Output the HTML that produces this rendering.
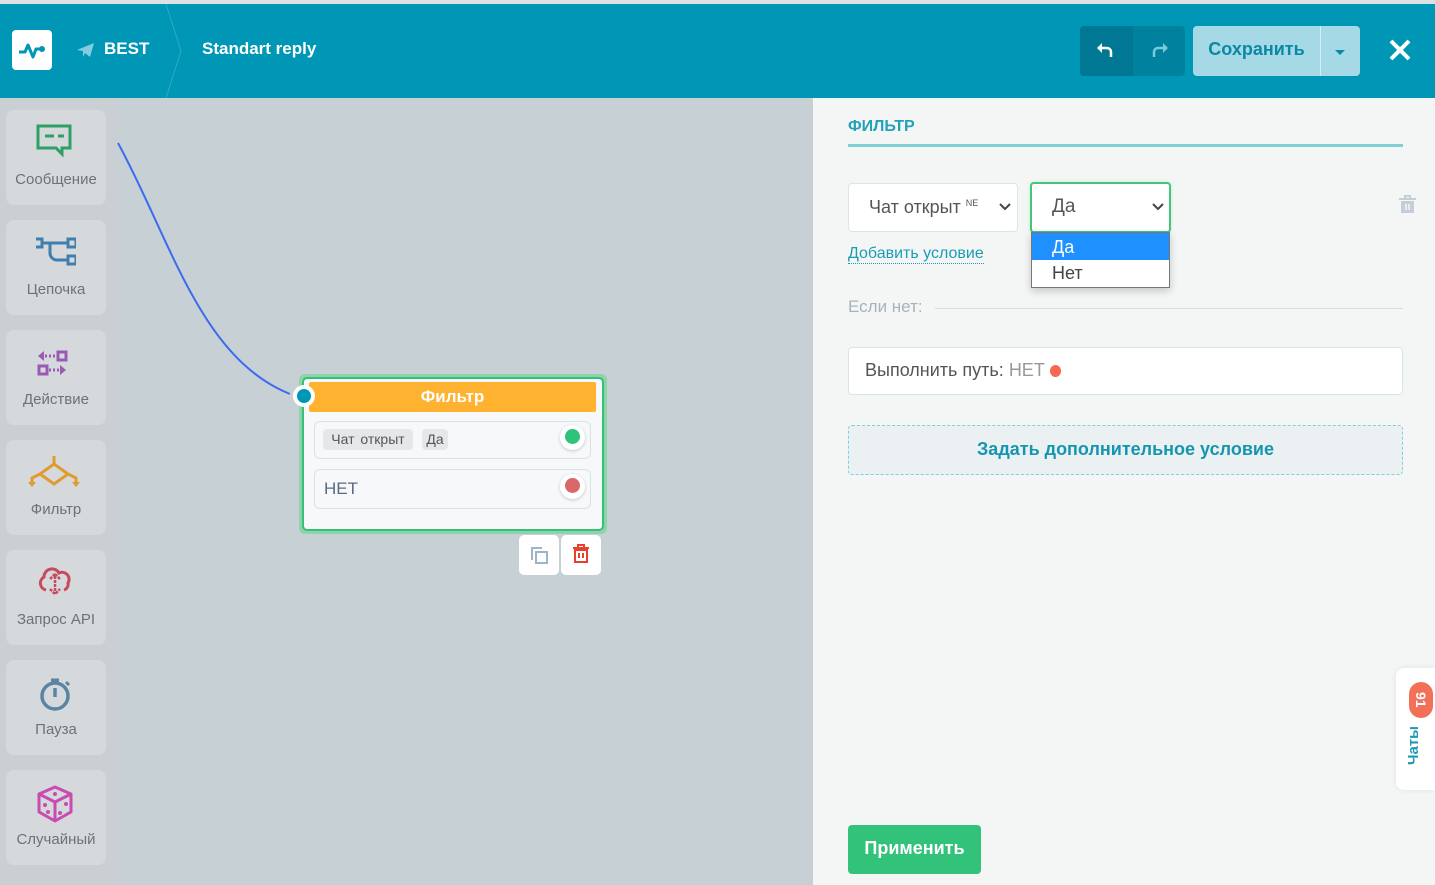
<!DOCTYPE html>
<html><head><meta charset="utf-8"><style>
*{box-sizing:border-box;margin:0;padding:0}
body{width:1435px;height:885px;overflow:hidden;font-family:"Liberation Sans",sans-serif;background:#c6d0d5;position:relative}
.top{position:absolute;left:0;top:0;width:1435px;height:4px;background:#dde1e3}
.hdr{position:absolute;left:0;top:4px;width:1435px;height:94px;background:#0097b6}
.abs{position:absolute}
.side{position:absolute;left:0;top:98px;width:118px;height:787px;background:#c9cfd3}
.item{position:absolute;left:6px;width:100px;height:95px;background:#d5d9dc;border-radius:8px;text-align:center;font-size:15px;color:#6b7378}
.item svg{position:absolute;left:30px;top:14px}
.item span{position:absolute;left:0;right:0;top:61px}
.panel{position:absolute;left:813px;top:98px;width:622px;height:787px;background:#f4f6f6}
</style></head><body>
<div class="top"></div>
<div class="hdr">
  <div class="abs" style="left:12px;top:26px;width:40px;height:40px;background:#fff;border-radius:4px"></div>
  <svg class="abs" style="left:12px;top:26px" width="40" height="40"><path d="M7 22h6l3-7 5 12 3-8h5" fill="none" stroke="#0097b6" stroke-width="3" stroke-linejoin="round"/><circle cx="30" cy="19" r="3" fill="#0097b6"/></svg>
  <svg class="abs" style="left:77px;top:38px" width="18" height="16"><path d="M0 8L17 1 13 15 8 11 6 15 6 9z" fill="#86cce0"/></svg>
  <div class="abs" style="left:104px;top:35px;color:#fff;font-weight:bold;font-size:17px">BEST</div>
  <svg class="abs" style="left:160px;top:0" width="25" height="94"><path d="M6 0L21 47 6 94" fill="none" stroke="#30a9c4" stroke-width="1"/></svg>
  <div class="abs" style="left:202px;top:35px;color:#fff;font-weight:bold;font-size:17px">Standart reply</div>
  <div class="abs" style="left:1080px;top:22px;width:105px;height:50px;background:#00829e;border-radius:4px"></div>
  <div class="abs" style="left:1080px;top:22px;width:53px;height:50px;background:#007793;border-radius:4px 0 0 4px"></div>
  <svg class="abs" style="left:1096px;top:37px" width="20" height="20"><path d="M4 7h7a4 4 0 014 4v5" fill="none" stroke="#fff" stroke-width="2.5"/><path d="M1 7l5-5v10z" fill="#fff"/></svg>
  <svg class="abs" style="left:1149px;top:37px" width="20" height="20"><path d="M16 7H9a4 4 0 00-4 4v5" fill="none" stroke="#7cc8da" stroke-width="2.5"/><path d="M19 7l-5-5v10z" fill="#7cc8da"/></svg>
  <div class="abs" style="left:1193px;top:22px;width:167px;height:50px;background:#a5d9e6;border-radius:4px"></div>
  <div class="abs" style="left:1320px;top:22px;width:1px;height:50px;background:#d5eef4"></div>
  <div class="abs" style="left:1193px;top:35px;width:127px;text-align:center;color:#0b88a5;font-size:18px;font-weight:bold">Сохранить</div>
  <div class="abs" style="left:1335px;top:46px;border:5px solid transparent;border-top-color:#0b88a5;border-bottom:0"></div>
  <svg class="abs" style="left:1388px;top:34px" width="24" height="24"><path d="M3 3l18 18M21 3L3 21" stroke="#fff" stroke-width="4"/></svg>
</div>
<div class="side">
  <div class="item" style="top:12px"><svg width="40" height="40"><path d="M2 2h32v22h-8v6l-6-6H2z" fill="none" stroke="#2fa065" stroke-width="3"/><path d="M9 12h9M22 12h6" stroke="#2fa065" stroke-width="3"/></svg><span>Сообщение</span></div>
  <div class="item" style="top:122px"><svg width="40" height="40"><rect x="-2" y="5" width="8" height="8" fill="none" stroke="#3e7fae" stroke-width="3"/><rect x="32" y="5" width="8" height="8" fill="none" stroke="#3e7fae" stroke-width="3"/><rect x="32" y="22" width="8" height="8" fill="none" stroke="#3e7fae" stroke-width="3"/><path d="M6 9h26M14 9v10a7 7 0 007 7h11" fill="none" stroke="#3e7fae" stroke-width="3"/></svg><span>Цепочка</span></div>
  <div class="item" style="top:232px"><svg width="40" height="40"><path d="M2 12l6-5v10z" fill="#9b59b6"/><path d="M9 12h2M13 12h2M17 12h2" stroke="#9b59b6" stroke-width="3"/><rect x="22" y="8" width="8" height="8" fill="none" stroke="#9b59b6" stroke-width="3"/><rect x="3" y="22" width="8" height="8" fill="none" stroke="#9b59b6" stroke-width="3"/><path d="M13 26h2M17 26h2M21 26h2" stroke="#9b59b6" stroke-width="3"/><path d="M24 21l6 5-6 5z" fill="#9b59b6"/></svg><span>Действие</span></div>
  <div class="item" style="top:342px"><svg width="52" height="40" style="left:22px"><path d="M26 2v8M26 10l-14 10 14 10 14-10z M12 20l-8 4v5M40 20l8 4v5" fill="none" stroke="#e09b30" stroke-width="3"/><path d="M0 28h8l-4 5zM44 28h8l-4 5z" fill="#e09b30"/></svg><span>Фильтр</span></div>
  <div class="item" style="top:452px"><svg width="40" height="40"><path d="M10 26a7 7 0 01-2-13 8 8 0 0115-4 7 7 0 019 10 6 6 0 01-4 7" fill="none" stroke="#c94a5c" stroke-width="3"/><path d="M19 10l-5 5M19 10l5 5M19 12v18M14 25l5 5 5-5" fill="none" stroke="#c94a5c" stroke-width="2.5" stroke-dasharray="3 1"/></svg><span>Запрос API</span></div>
  <div class="item" style="top:562px"><svg width="40" height="40"><circle cx="19" cy="22" r="13" fill="none" stroke="#5a84a3" stroke-width="3.5"/><path d="M19 14v9" stroke="#5a84a3" stroke-width="3.5"/><path d="M15 6h8M30 8l3 3" stroke="#5a84a3" stroke-width="3"/></svg><span>Пауза</span></div>
  <div class="item" style="top:672px"><svg width="40" height="40"><path d="M19 3l16 7v18l-16 9-16-9V10z M3 10l16 8 16-8 M19 18v19" fill="none" stroke="#c94bb0" stroke-width="3" stroke-linejoin="round"/><circle cx="19" cy="10" r="2" fill="#c94bb0"/><circle cx="9" cy="21" r="2" fill="#c94bb0"/><circle cx="12" cy="28" r="2" fill="#c94bb0"/><circle cx="30" cy="20" r="2" fill="#c94bb0"/><circle cx="24" cy="29" r="2" fill="#c94bb0"/></svg><span>Случайный</span></div>
</div>
<svg class="abs" style="left:0;top:98px" width="320" height="320"><path d="M118 45C170 140 200 260 290 296" fill="none" stroke="#3b6cf0" stroke-width="2"/></svg>
<div class="abs" style="left:299px;top:374px;width:308px;height:160px;border-radius:6px;background:#8fd3a8"></div>
<div class="abs" style="left:302px;top:377px;width:302px;height:154px;border-radius:5px;background:#f6f8f9;border:2px solid #34c07a"></div>
<div class="abs" style="left:309px;top:382px;width:287px;height:30px;background:#ffb230;border-radius:2px;color:#fff;font-weight:bold;font-size:17px;text-align:center;line-height:30px">Фильтр</div>
<div class="abs" style="left:293px;top:385px;width:22px;height:22px;border-radius:50%;background:#0097b6;border:4px solid #fff"></div>
<div class="abs" style="left:314px;top:421px;width:277px;height:38px;border:1px solid #d6e3e4;border-radius:6px;background:#f6f8f9"></div>
<div class="abs" style="left:323px;top:429px;width:90px;height:21px;background:#e5e8ea;border-radius:4px;font-size:14px;color:#555;line-height:21px;text-align:center;word-spacing:2px">Чат открыт</div>
<div class="abs" style="left:422px;top:429px;width:26px;height:21px;background:#e5e8ea;border-radius:4px;font-size:14px;color:#555;line-height:21px;text-align:center">Да</div>
<div class="abs" style="left:560px;top:425px;width:25px;height:25px;border-radius:50%;background:#fff;box-shadow:0 1px 3px rgba(0,0,0,.2)"></div>
<div class="abs" style="left:565px;top:429px;width:15px;height:15px;border-radius:50%;background:#2fc27a"></div>
<div class="abs" style="left:314px;top:469px;width:277px;height:40px;border:1px solid #d6e3e4;border-radius:6px;background:#f6f8f9;font-size:17px;color:#5a6a82;padding:9px 0 0 9px">НЕТ</div>
<div class="abs" style="left:560px;top:474px;width:25px;height:25px;border-radius:50%;background:#fff;box-shadow:0 1px 3px rgba(0,0,0,.2)"></div>
<div class="abs" style="left:565px;top:478px;width:15px;height:15px;border-radius:50%;background:#d9686a"></div>
<div class="abs" style="left:519px;top:535px;width:40px;height:40px;background:#fff;border-radius:5px"></div>
<svg class="abs" style="left:529px;top:545px" width="20" height="20"><path d="M2 2h11v2H4v11H2z" fill="#9fb4c4"/><rect x="7" y="7" width="11" height="11" fill="none" stroke="#9fb4c4" stroke-width="2"/></svg>
<div class="abs" style="left:561px;top:535px;width:40px;height:40px;background:#fff;border-radius:5px"></div>
<svg class="abs" style="left:571px;top:543px" width="20" height="22"><path d="M2 5h16M7 5V2h6v3" stroke="#e8402c" stroke-width="2" fill="none"/><path d="M4 7h12v12H4z" fill="none" stroke="#e8402c" stroke-width="2"/><path d="M8 10v5M12 10v5" stroke="#e8402c" stroke-width="2"/></svg>
<div class="panel">
  <div class="abs" style="left:35px;top:20px;color:#22a2b8;font-weight:bold;font-size:16px">ФИЛЬТР</div>
  <div class="abs" style="left:35px;top:46px;width:555px;height:3px;background:#7fcfd5"></div>
  <div class="abs" style="left:35px;top:85px;width:170px;height:49px;background:#fff;border:1px solid #dbe5e5;border-radius:4px;font-size:18px;color:#555;padding:13px 0 0 20px">Чат открыт <sup style="font-size:9px">NE</sup></div>
  <svg class="abs" style="left:186px;top:105px" width="12" height="8"><path d="M1 1l5 5 5-5" stroke="#444" stroke-width="2" fill="none"/></svg>
  <div class="abs" style="left:217px;top:84px;width:141px;height:51px;background:#fff;border:2px solid #46c47d;border-radius:4px;box-shadow:0 0 3px #bfe9cf;font-size:19px;color:#555;padding:12px 0 0 20px">Да</div>
  <svg class="abs" style="left:339px;top:105px" width="12" height="8"><path d="M1 1l5 5 5-5" stroke="#444" stroke-width="2" fill="none"/></svg>
  <svg class="abs" style="left:585px;top:97px" width="19" height="20"><path d="M1 4h17M7 4V1h5v3" stroke="#c3ced6" stroke-width="2" fill="none"/><rect x="3" y="6" width="13" height="12" fill="#c3ced6"/><path d="M8 9v6M11 9v6" stroke="#f4f6f6" stroke-width="1.5"/></svg>
  <div class="abs" style="left:35px;top:147px;font-size:16px;color:#1a9cb5;border-bottom:1px dotted #1a9cb5;line-height:18px">Добавить условие</div>
  <div class="abs" style="left:35px;top:199px;font-size:17px;color:#a8b2bc">Если нет:</div>
  <div class="abs" style="left:122px;top:210px;width:468px;height:1px;background:#d5dfe0"></div>
  <div class="abs" style="left:218px;top:134px;width:139px;height:56px;background:#fff;border:1px solid #777;box-shadow:0 3px 8px rgba(0,0,0,.2)"></div>
  <div class="abs" style="left:219px;top:135px;width:137px;height:27px;background:#1e90ff;color:#fff;font-size:18px;padding:4px 0 0 20px">Да</div>
  <div class="abs" style="left:219px;top:165px;font-size:18px;color:#444;padding:0 0 0 20px">Нет</div>
  <div class="abs" style="left:35px;top:249px;width:555px;height:48px;background:#fff;border:1px solid #d9e5e5;border-radius:4px;font-size:18px;color:#555;padding:12px 0 0 16px">Выполнить путь: <span style="color:#999">НЕТ</span> <span style="display:inline-block;width:11px;height:12px;border-radius:50%;background:#f4694f;vertical-align:-1px"></span></div>
  <div class="abs" style="left:35px;top:327px;width:555px;height:50px;background:#ebf1f3;border:1px dashed #7fcfdf;border-radius:4px;text-align:center;font-weight:bold;font-size:18px;color:#1595af;line-height:46px">Задать дополнительное условие</div>
  <div class="abs" style="left:35px;top:727px;width:133px;height:49px;background:#33c27a;border-radius:4px;color:#fff;font-weight:bold;font-size:18px;text-align:center;line-height:47px">Применить</div>
  <div class="abs" style="left:583px;top:570px;width:39px;height:122px;background:#fff;border-radius:8px 0 0 8px;box-shadow:0 0 6px rgba(0,0,0,.08)"></div>
  <div class="abs" style="left:596px;top:584px;width:24px;height:36px;background:#f37058;border-radius:12px;color:#fff;font-weight:bold;font-size:14px;writing-mode:vertical-rl;text-align:center;line-height:24px">91</div>
  <div class="abs" style="left:592px;top:628px;writing-mode:vertical-rl;transform:rotate(180deg);color:#1c9ab4;font-weight:bold;font-size:15px;width:20px">Чаты</div>
</div>
</body></html>
